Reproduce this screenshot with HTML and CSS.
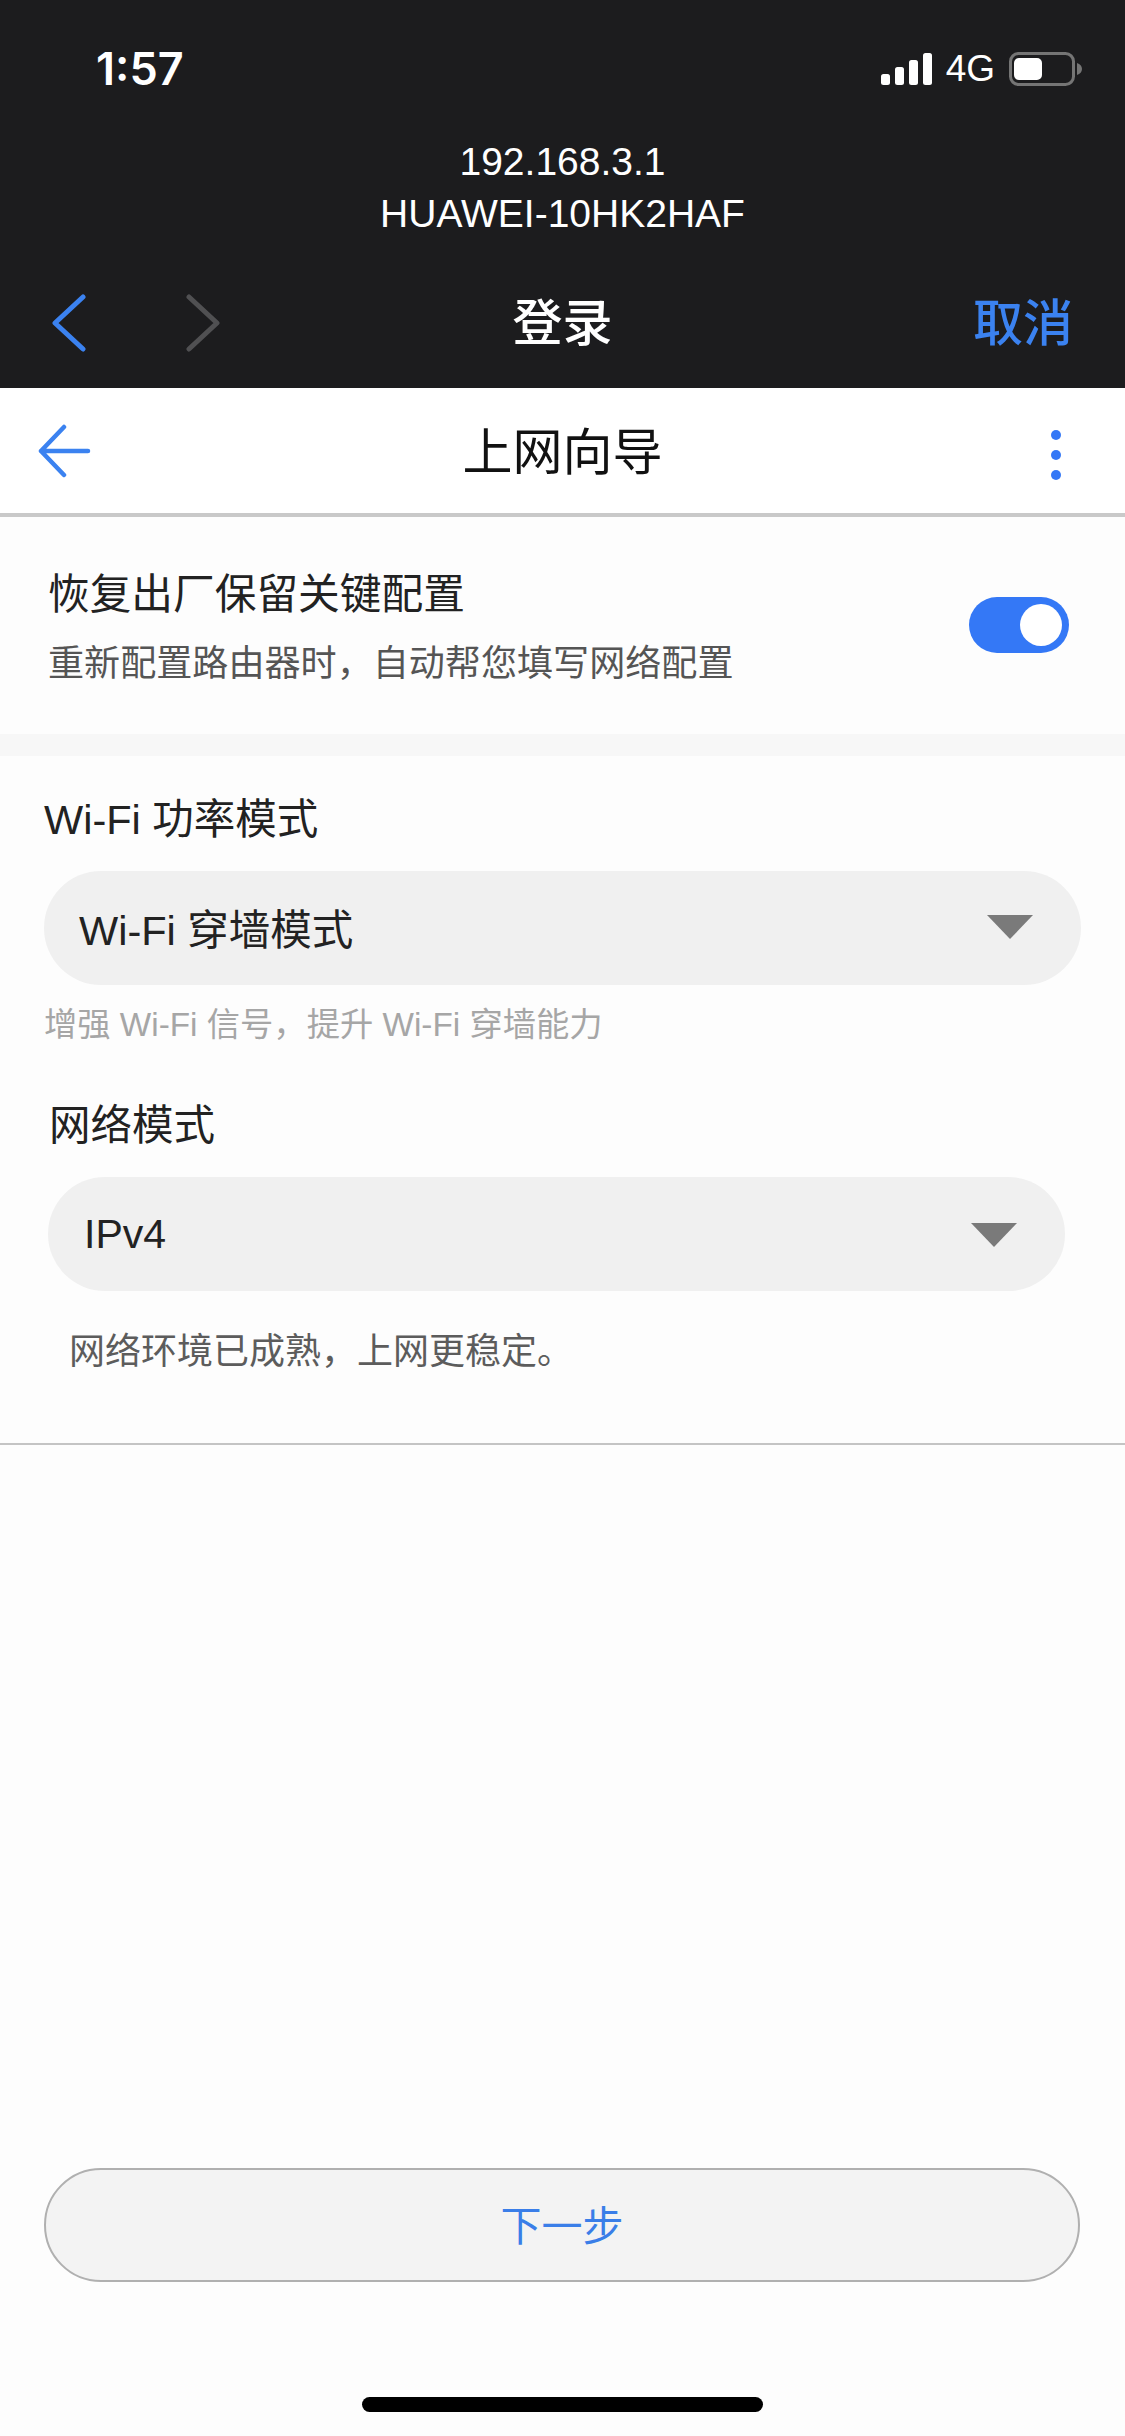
FILE: index.html
```html
<!DOCTYPE html>
<html lang="zh-CN">
<head>
  <meta charset="UTF-8">
  <title>上网向导</title>
  <link rel="stylesheet" href="styles.css">
</head>
<body>
  <div class="browser-bar">
    <div class="status-row">
      <span class="time">1:57</span>
      <div class="status-icons">
        <svg class="signal" width="51" height="32" viewBox="0 0 51 32">
          <rect x="0" y="21" width="9" height="11" rx="2.5"/>
          <rect x="14" y="14" width="9" height="18" rx="2.5"/>
          <rect x="28" y="7" width="9" height="25" rx="2.5"/>
          <rect x="42" y="0" width="9" height="32" rx="2.5"/>
        </svg>
        <span class="network">4G</span>
        <svg class="battery" width="73" height="34" viewBox="0 0 73 34">
          <rect x="1.5" y="1.5" width="63" height="31" rx="8" fill="none" stroke="#757575" stroke-width="3"/>
          <rect x="5" y="6" width="28" height="22" rx="5" fill="#fff"/>
          <path d="M68 11c3 1 5 3 5 6s-2 5-5 6z" fill="#757575"/>
        </svg>
      </div>
    </div>
    <div class="address">
      <div>192.168.3.1</div>
      <div>HUAWEI-10HK2HAF</div>
    </div>
    <div class="toolbar">
      <div class="toolbar-nav">
        <svg width="34" height="60" viewBox="0 0 34 60" fill="none" stroke="#3b82f0" stroke-width="5" stroke-linecap="round" stroke-linejoin="round">
          <path d="M31 4 3 30l28 26"/>
        </svg>
        <svg width="34" height="60" viewBox="0 0 34 60" fill="none" stroke="#505052" stroke-width="5" stroke-linecap="round" stroke-linejoin="round">
          <path d="M3 4l28 26L3 56"/>
        </svg>
      </div>
      <span class="toolbar-title">登录</span>
      <span class="toolbar-cancel">取消</span>
    </div>
  </div>

  <div class="page-header">
    <svg class="back" width="54" height="54" viewBox="0 0 54 54" fill="none" stroke="#3b82f0" stroke-width="4.5" stroke-linecap="round" stroke-linejoin="round">
      <path d="M50 27H3M26 3 3 27l23 24"/>
    </svg>
    <span class="page-title">上网向导</span>
    <div class="dots"><i></i><i></i><i></i></div>
  </div>

  <div class="restore">
    <div class="restore-text">
      <div class="restore-title">恢复出厂保留关键配置</div>
      <div class="restore-sub">重新配置路由器时，自动帮您填写网络配置</div>
    </div>
    <div class="toggle"><i></i></div>
  </div>
  <div class="band"></div>

  <div class="form">
    <div class="label">Wi-Fi 功率模式</div>
    <div class="select">
      <span>Wi-Fi 穿墙模式</span>
      <i class="caret"></i>
    </div>
    <div class="hint">增强 Wi-Fi 信号，提升 Wi-Fi 穿墙能力</div>

    <div class="label label-net">网络模式</div>
    <div class="select select-net">
      <span>IPv4</span>
      <i class="caret"></i>
    </div>
    <div class="note">网络环境已成熟，上网更稳定。</div>
  </div>
  <div class="divider"></div>

  <div class="spacer"></div>
  <div class="next-btn">下一步</div>
  <div class="home-bar"></div>
</body>
</html>
```

FILE: styles.css
```css
* {
  box-sizing: border-box;
}
body {
  margin: 0;
  width: 1125px;
  height: 2436px;
  display: flex;
  flex-direction: column;
  background: #fdfdfd;
  color: #222;
  font-family: "Liberation Sans", "Noto Sans CJK SC", sans-serif;
  overflow: hidden;
}

/* browser chrome */
.browser-bar {
  height: 388px;
  background: #1c1c1e;
  color: #fff;
}
.status-row {
  height: 136px;
  padding: 45px 43px 0 96px;
  display: flex;
  justify-content: space-between;
  align-items: flex-start;
}
.time {
  font-family: Inter, "Liberation Sans", sans-serif;
  font-size: 45px;
  line-height: 48px;
  font-weight: 600;
}
.status-icons {
  display: flex;
  align-items: center;
  height: 48px;
}
.signal {
  fill: #fff;
}
.network {
  font-size: 37px;
  line-height: 48px;
  margin-left: 14px;
  margin-right: 14px;
}
.address {
  height: 104px;
  text-align: center;
  font-size: 39px;
  line-height: 52px;
}
.toolbar {
  height: 130px;
  margin-top: 18px;
  padding: 0 52px;
  display: flex;
  align-items: center;
  justify-content: space-between;
  position: relative;
}
.toolbar-nav {
  display: flex;
  gap: 100px;
}
.toolbar-title {
  position: absolute;
  left: 0;
  right: 0;
  padding-bottom: 8px;
  text-align: center;
  font-size: 50px;
  font-weight: 500;
}
.toolbar-cancel {
  padding-bottom: 8px;
  font-size: 50px;
  font-weight: 500;
  color: #3b82f0;
}

/* page header */
.page-header {
  height: 129px;
  padding: 0 64px 0 38px;
  border-bottom: 4px solid #c9c9c9;
  background: #fff;
  display: flex;
  align-items: center;
  justify-content: space-between;
  position: relative;
}
.page-title {
  position: absolute;
  left: 0;
  right: 0;
  padding-bottom: 6px;
  text-align: center;
  font-size: 50px;
  color: #111;
}
.dots {
  margin-top: 8px;
  display: flex;
  flex-direction: column;
  gap: 10px;
}
.dots i {
  width: 10px;
  height: 10px;
  border-radius: 50%;
  background: #3478f6;
}

/* restore row */
.restore {
  height: 217px;
  padding: 0 56px 0 48px;
  display: flex;
  align-items: center;
  justify-content: space-between;
}
.restore-text {
  padding-top: 8px;
}
.restore-title {
  font-size: 41.7px;
  line-height: 50px;
}
.restore-sub {
  font-size: 36.1px;
  line-height: 50px;
  margin-top: 19px;
  color: #555;
}
.toggle {
  width: 100px;
  height: 56px;
  margin-bottom: 1px;
  padding: 7px;
  border-radius: 28px;
  background: #3478f6;
  display: flex;
  justify-content: flex-end;
}
.toggle i {
  width: 42px;
  height: 42px;
  border-radius: 50%;
  background: #fff;
}
.band {
  height: 22px;
  background: #f7f7f7;
}

/* form */
.form {
  padding: 39px 0 0 44px;
}
.label {
  font-size: 41.5px;
  line-height: 50px;
}
.label-net {
  margin-top: 54px;
  margin-left: 5px;
}
.select {
  width: 1037px;
  height: 114px;
  margin-top: 26px;
  padding: 0 48px 3px 35px;
  border-radius: 57px;
  background: #f0f0f0;
  font-size: 41.5px;
  display: flex;
  align-items: center;
  justify-content: space-between;
}
.select-net {
  width: 1017px;
  margin-left: 4px;
  padding: 1px 48px 0 36px;
  font-size: 41px;
}
.caret {
  width: 0;
  height: 0;
  border-left: 23px solid transparent;
  border-right: 23px solid transparent;
  border-top: 24px solid #7a7a7a;
}
.hint {
  margin-top: 18px;
  font-size: 33.3px;
  line-height: 44px;
  color: #a6a6a6;
}
.note {
  margin-top: 39px;
  margin-left: 25px;
  font-size: 36px;
  line-height: 44px;
  color: #5c5c5c;
}
.divider {
  height: 2px;
  margin-top: 69px;
  background: #c4c4c4;
}
.spacer {
  flex: 1;
}
.next-btn {
  width: 1036px;
  height: 114px;
  margin: 0 0 115px 44px;
  padding-bottom: 4px;
  border: 2px solid #b0b0b0;
  border-radius: 57px;
  background: #f3f3f3;
  color: #3a7ee8;
  font-size: 41px;
  display: flex;
  align-items: center;
  justify-content: center;
}
.home-bar {
  width: 401px;
  height: 15px;
  margin: 0 0 24px 362px;
  border-radius: 8px;
  background: #000;
}
```
